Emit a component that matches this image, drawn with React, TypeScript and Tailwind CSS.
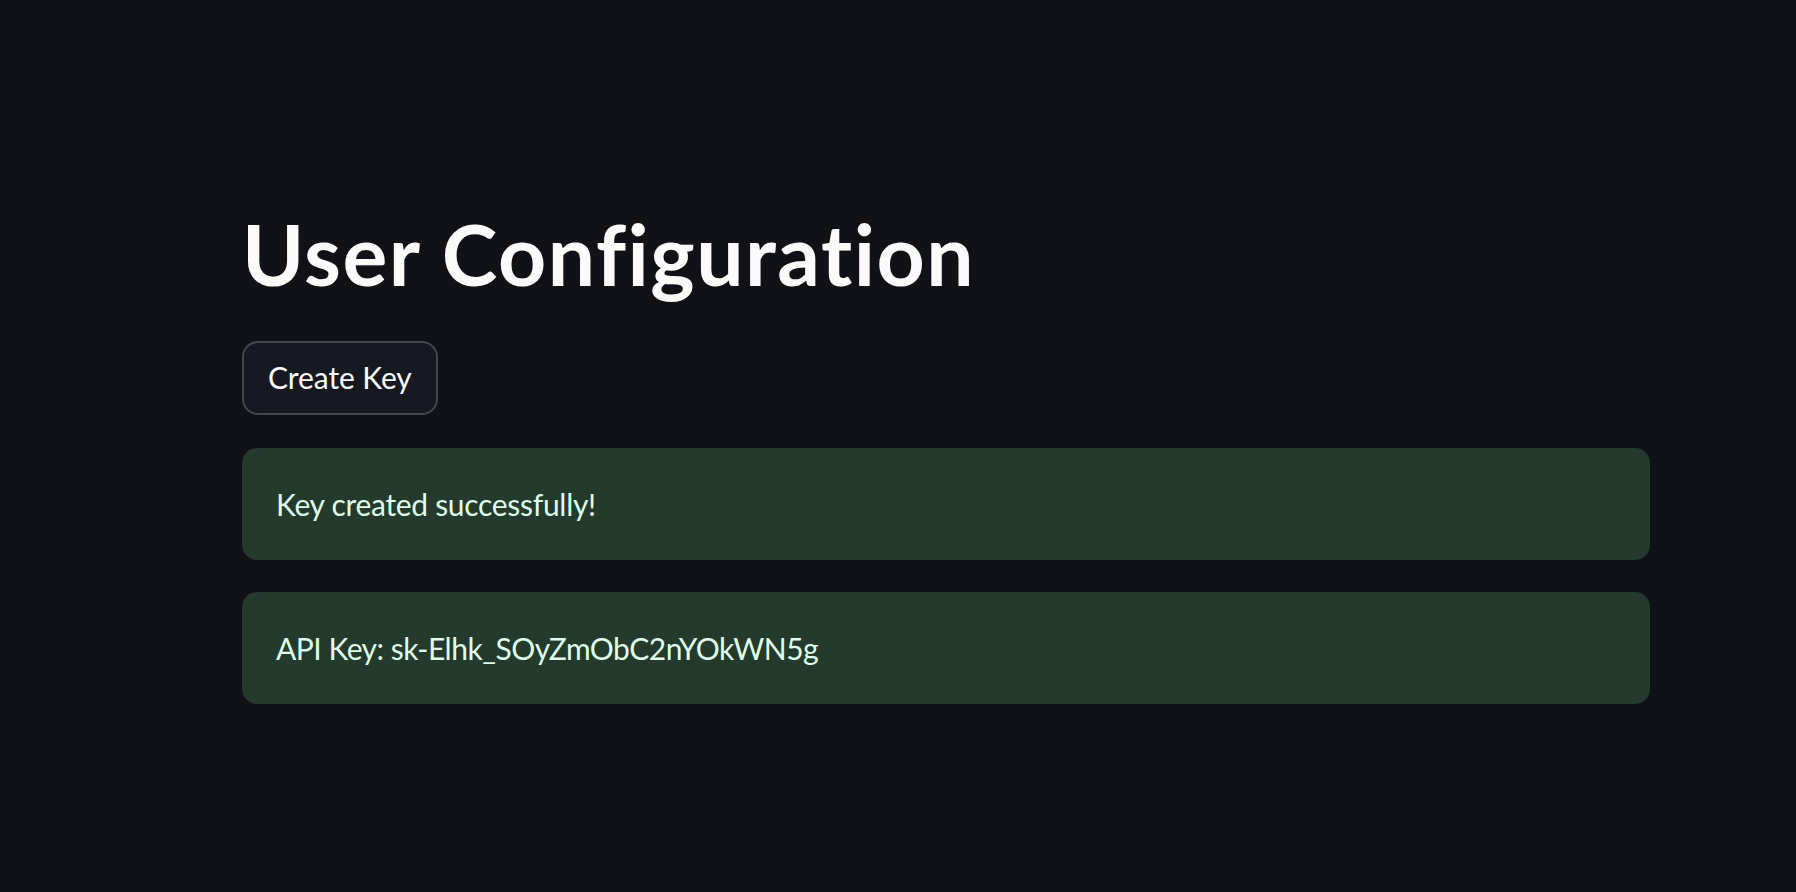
export default function App() {
  return (
    <div
      className="min-h-screen w-full bg-[#101218] text-[#fafafa]"
      style={{ fontFamily: '"Lato", "Noto Sans", sans-serif' }}
    >
      <div className="pl-[242px] pt-[204px] w-[1650px]">
        <h1 className="text-[84px] font-bold leading-[1.2] tracking-[1.5px]">User Configuration</h1>

        <div className="mt-[36px]">
          <button className="h-[74px] px-[24px] rounded-[16px] border-2 border-[#44464f] bg-[#161922] text-[30px] tracking-[-0.1px] text-[#fafafa]">
            Create Key
          </button>
        </div>

        <div className="mt-[33px] flex flex-col gap-[32px]">
          <div className="rounded-[15px] bg-[#233a2d] px-[34px] py-[32px] text-[30px] leading-[48px] tracking-[-0.3px] text-[#dffde9]">
            Key created successfully!
          </div>
          <div className="rounded-[15px] bg-[#233a2d] px-[34px] py-[32px] text-[30px] leading-[48px] tracking-[-0.5px] text-[#dffde9]">
            API Key: sk-Elhk_SOyZmObC2nYOkWN5g
          </div>
        </div>
      </div>
    </div>
  );
}
